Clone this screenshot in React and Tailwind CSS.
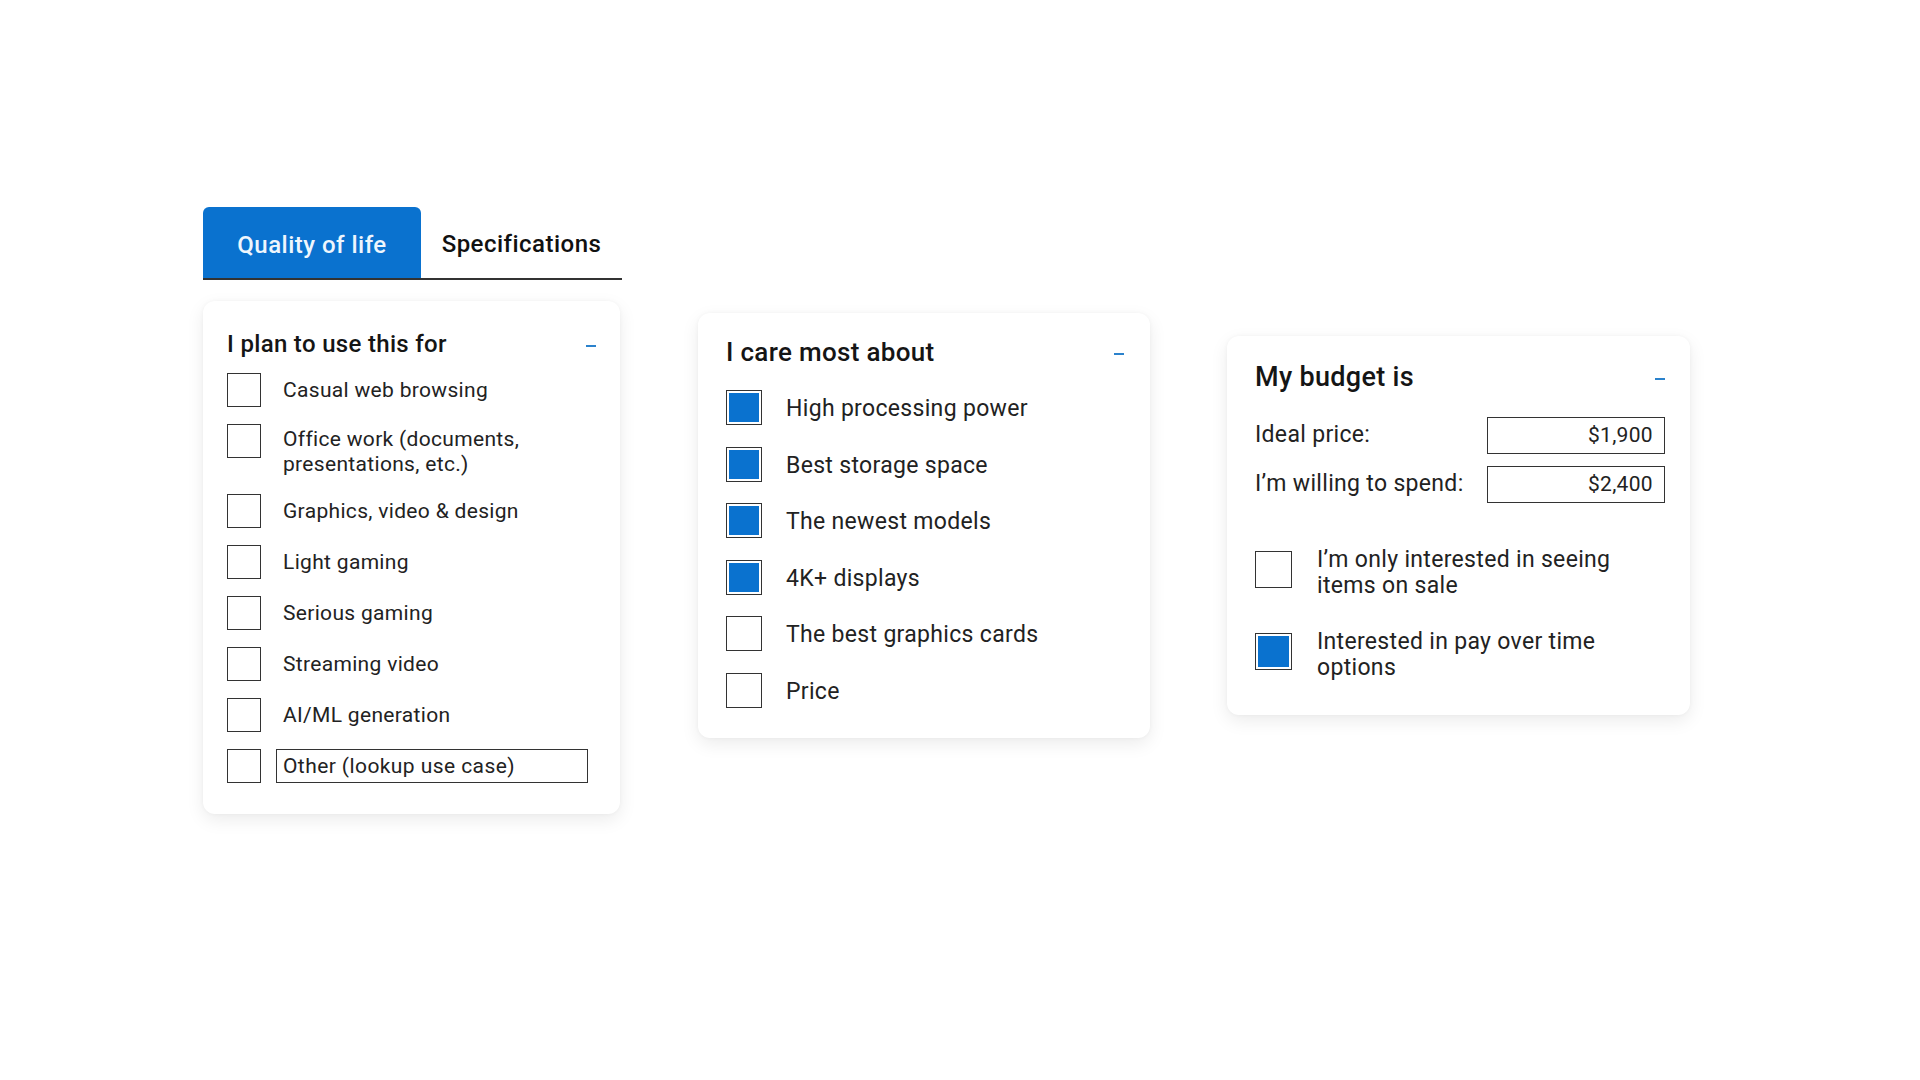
import React, { useState } from 'react';

const BLUE = 'bg-[#0a72cf]';

const Minus = () => <div className="w-[10px] h-[2px] bg-[#2b82cc] mt-[4px]" />;

const Box = ({ checked, size }) => (
    <div className={`${size} shrink-0 border-[1.5px] border-[#333] bg-white p-[2px]`}>
        {checked && <div className={`w-full h-full ${BLUE}`} />}
    </div>
);

const useItems = [
    { label: 'Casual web browsing' },
    { label: <>Office work (documents,<br />presentations, etc.)</>, multi: true },
    { label: 'Graphics, video & design' },
    { label: 'Light gaming' },
    { label: 'Serious gaming' },
    { label: 'Streaming video' },
    { label: 'AI/ML generation' },
];

const careItems = [
    { label: 'High processing power', checked: true },
    { label: 'Best storage space', checked: true },
    { label: 'The newest models', checked: true },
    { label: '4K+ displays', checked: true },
    { label: 'The best graphics cards', checked: false },
    { label: 'Price', checked: false },
];

const Card = ({ className, children }) => (
    <div className={`bg-white rounded-xl shadow-[0_6px_18px_rgba(0,0,0,0.08),0_0_4px_rgba(0,0,0,0.04)] ${className}`}>
        {children}
    </div>
);

const App = () => {
    const [tab, setTab] = useState('quality');
    const [other, setOther] = useState('Other (lookup use case)');

    return (
        <div className="min-h-screen bg-white font-['Roboto',sans-serif] text-[#222] tracking-[0.02em] pl-[203px] pt-[207px]">
            {/* tabs */}
            <div className="flex w-[419px] border-b-2 border-[#333]">
                <button
                    onClick={() => setTab('quality')}
                    className={`w-[218px] h-[71px] rounded-t-md flex items-center justify-center pt-[5px] text-[24px] font-medium tracking-[0.02em] ${tab === 'quality' ? 'bg-[#0a72cf] text-[#eef6fd]' : 'text-[#111]'}`}
                >
                    Quality of life
                </button>
                <button
                    onClick={() => setTab('specs')}
                    className={`flex-1 h-[71px] rounded-t-md flex items-center justify-center pt-[3px] text-[24px] font-medium tracking-[0.02em] ${tab === 'specs' ? 'bg-[#0a72cf] text-[#eef6fd]' : 'text-[#111]'}`}
                >
                    Specifications
                </button>
            </div>

            <div className="flex items-start mt-[21px]">
                {/* card 1 */}
                <Card className="w-[417px] pl-6 pr-[24px] pt-[29px] pb-[31px]">
                    <div className="flex items-center justify-between">
                        <h3 className="text-[24px] leading-[28px] font-medium text-[#151515]">I plan to use this for</h3>
                        <Minus />
                    </div>
                    <div className="mt-[15px] flex flex-col gap-[17px]">
                        {useItems.map((item, i) => (
                            <div key={i} className="flex items-start gap-[22px]">
                                <Box size="w-[34px] h-[34px]" />
                                <div className={`text-[21px] ${item.multi ? 'leading-[25px] pt-[3px]' : 'leading-[26px] pt-[4px]'}`}>{item.label}</div>
                            </div>
                        ))}
                        <div className="flex items-center gap-[15px]">
                            <Box size="w-[34px] h-[34px]" />
                            <input
                                value={other}
                                onChange={(e) => setOther(e.target.value)}
                                className="w-[312px] h-[34px] border-[1.5px] border-[#333] px-[6px] text-[21px] tracking-[0.02em] text-[#222] outline-none"
                            />
                        </div>
                    </div>
                </Card>

                {/* card 2 */}
                <Card className="w-[452px] ml-[78px] mt-[12px] pl-[28px] pr-[26px] pt-[24px] pb-[30px]">
                    <div className="flex items-center justify-between">
                        <h3 className="text-[26px] leading-[30px] font-medium text-[#151515]">I care most about</h3>
                        <Minus />
                    </div>
                    <div className="mt-[23px] flex flex-col gap-[21.5px]">
                        {careItems.map((item, i) => (
                            <div key={i} className="flex items-center gap-[24px]">
                                <Box size="w-[36px] h-[35px]" checked={item.checked} />
                                <div className="text-[23px] leading-[28px] pt-[3px]">{item.label}</div>
                            </div>
                        ))}
                    </div>
                </Card>

                {/* card 3 */}
                <Card className="w-[463px] ml-[77px] mt-[35px] pl-[28px] pr-[25px] pt-[25px] pb-[34px]">
                    <div className="flex items-center justify-between">
                        <h3 className="text-[27px] leading-[32px] font-medium text-[#151515]">My budget is</h3>
                        <Minus />
                    </div>
                    <div className="mt-[24px] flex flex-col gap-[12px]">
                        <div className="flex items-center justify-between">
                            <span className="text-[23px]">Ideal price:</span>
                            <div className="w-[178px] h-[37px] border-[1.5px] border-[#333] flex items-center justify-end pr-[11px] text-[21px]">$1,900</div>
                        </div>
                        <div className="flex items-center justify-between">
                            <span className="text-[23px]">I’m willing to spend:</span>
                            <div className="w-[178px] h-[37px] border-[1.5px] border-[#333] flex items-center justify-end pr-[11px] text-[21px]">$2,400</div>
                        </div>
                    </div>
                    <div className="mt-[44px] flex flex-col gap-[30px]">
                        <div className="flex items-start gap-[25px]">
                            <div className="mt-[4px]"><Box size="w-[37px] h-[37px]" /></div>
                            <div className="text-[23px] leading-[26px]">I’m only interested in seeing<br />items on sale</div>
                        </div>
                        <div className="flex items-start gap-[25px]">
                            <div className="mt-[4px]"><Box size="w-[37px] h-[37px]" checked /></div>
                            <div className="text-[23px] leading-[26px]">Interested in pay over time<br />options</div>
                        </div>
                    </div>
                </Card>
            </div>
        </div>
    );
};

export default App;
